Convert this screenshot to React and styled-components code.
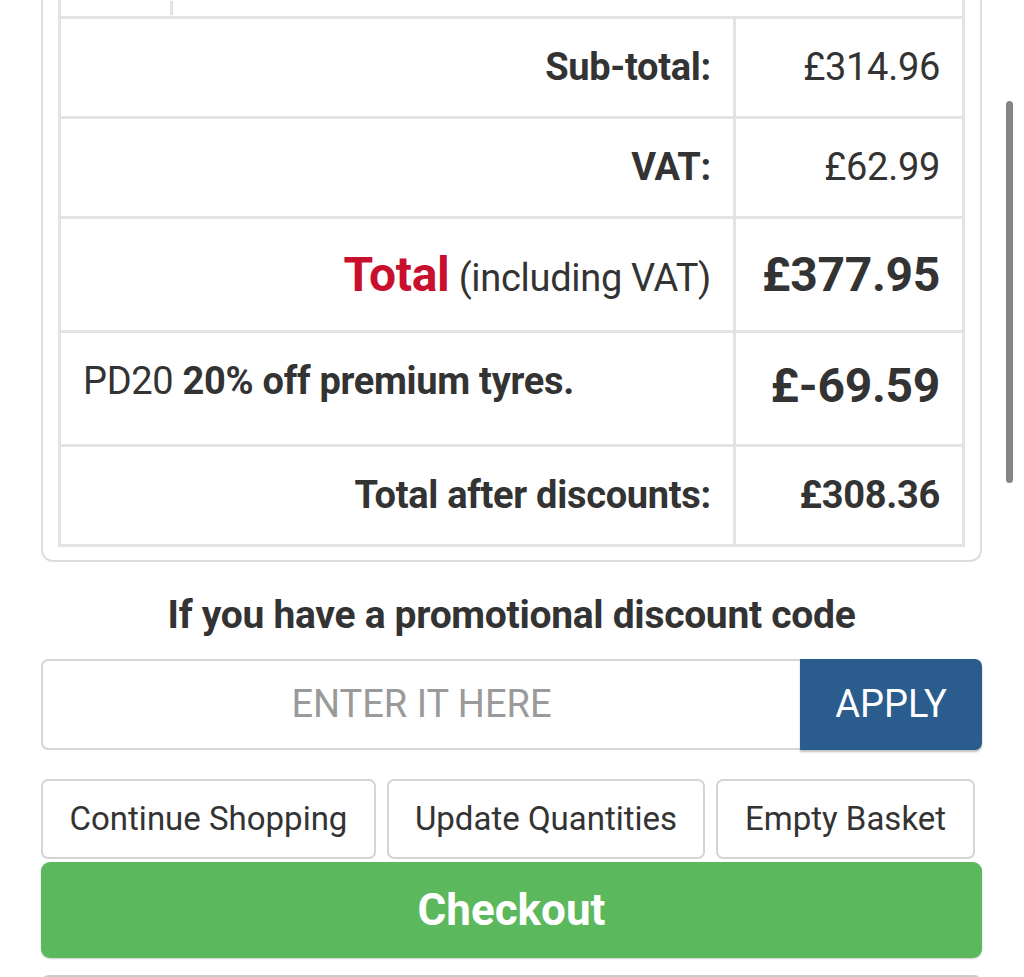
import React from "react";
import styled, { createGlobalStyle } from "styled-components";

const GlobalStyle = createGlobalStyle`
  html, body {
    margin: 0;
    padding: 0;
    background: #fff;
    overflow: hidden;
  }
  body {
    font-family: Roboto, "Liberation Sans", Arial, sans-serif;
    color: #333;
  }
`;

const Page = styled.div`
  padding: 0 42px 0 41px;
`;

const Panel = styled.div`
  border: 2px solid #ddd;
  border-top: none;
  border-radius: 0 0 12px 12px;
  padding: 0 15px 13px;
`;

const Table = styled.table`
  width: 100%;
  border-collapse: collapse;
  table-layout: fixed;
`;

const Cell = styled.td`
  border: 3px solid #e3e3e3;
  border-top: ${(p) => (p.$noTop ? "none" : "3px solid #e3e3e3")};
  height: ${(p) => p.$h || 94}px;
  padding: 0 22px 0 22px;
  text-align: ${(p) => p.$align || "right"};
  vertical-align: middle;
  font-size: ${(p) => p.$size || 38}px;
  font-weight: ${(p) => (p.$bold ? 700 : 400)};
  letter-spacing: -0.3px;
  color: #333;
  white-space: nowrap;
  box-sizing: border-box;
`;

const Red = styled.span`
  color: #c8102e;
  font-weight: 700;
  font-size: 48px;
`;

const Light = styled.span`
  font-weight: 400;
`;

const Heading = styled.h3`
  margin: 31px 0 22px;
  text-align: center;
  font-size: 39px;
  line-height: 44px;
  font-weight: 700;
  letter-spacing: -0.3px;
  color: #333;
`;

const PromoRow = styled.div`
  display: flex;
  height: 91px;
`;

const PromoInput = styled.input`
  flex: 1;
  min-width: 0;
  border: 2px solid #d6d6d6;
  border-right: none;
  border-radius: 7px 0 0 7px;
  font-family: Roboto, "Liberation Sans", Arial, sans-serif;
  font-size: 38px;
  text-align: center;
  color: #333;
  outline: none;
  padding: 0;
  &::placeholder {
    color: #9a9a9a;
  }
`;

const ApplyButton = styled.button`
  width: 182px;
  border: none;
  background: #2a5d8d;
  color: #fff;
  font-family: Roboto, "Liberation Sans", Arial, sans-serif;
  font-size: 38px;
  border-radius: 0 7px 7px 0;
  box-shadow: 0 2px 2px rgba(0, 0, 0, 0.25);
`;

const ButtonRow = styled.div`
  display: flex;
  gap: 11px;
  margin-top: 29px;
  padding-right: 7px;
`;

const PlainButton = styled.button`
  flex: ${(p) => p.$grow};
  height: 80px;
  background: #fff;
  border: 2px solid #d4d4d4;
  border-radius: 7px;
  font-family: Roboto, "Liberation Sans", Arial, sans-serif;
  font-size: 33px;
  color: #333;
  padding: 0;
  white-space: nowrap;
`;

const Checkout = styled.button`
  display: block;
  width: 100%;
  height: 96px;
  margin-top: 3px;
  border: none;
  border-radius: 9px;
  background: #5cb85c;
  color: #fff;
  font-family: Roboto, "Liberation Sans", Arial, sans-serif;
  font-size: 44px;
  font-weight: 700;
  box-shadow: 0 1px 2px rgba(0, 0, 0, 0.2);
`;

const NextEdge = styled.div`
  margin-top: 17px;
  height: 10px;
  border: 2px solid #ccc;
  border-bottom: none;
  border-radius: 8px 8px 0 0;
`;

const Scrollbar = styled.div`
  position: fixed;
  right: 11px;
  top: 101px;
  width: 7px;
  height: 382px;
  border-radius: 4px;
  background: #858585;
`;

const rows = [
  { label: "Sub-total:", value: "£314.96", h: 100 },
  { label: "VAT:", value: "£62.99", h: 100 },
];

const App = () => {
  return (
    <>
      <GlobalStyle />
      <Page>
        <Panel>
          <Table>
            <colgroup>
              <col />
              <col style={{ width: "229px" }} />
            </colgroup>
            <tbody>
              <tr>
                <Cell colSpan={2} $noTop $h={17} style={{ padding: 0 }}>
                  <Table>
                    <tbody>
                      <tr>
                        <Cell $noTop $h={14} style={{ width: "110px", borderLeft: "none", borderBottom: "none" }} />
                        <Cell $noTop $h={14} style={{ borderRight: "none", borderBottom: "none" }} />
                      </tr>
                    </tbody>
                  </Table>
                </Cell>
              </tr>
              {rows.map((r) => (
                <tr key={r.label}>
                  <Cell $bold $h={r.h}>{r.label}</Cell>
                  <Cell $h={r.h}>{r.value}</Cell>
                </tr>
              ))}
              <tr>
                <Cell $h={114}>
                  <Red>Total</Red> (including VAT)
                </Cell>
                <Cell $h={114} $bold $size={48}>£377.95</Cell>
              </tr>
              <tr>
                <Cell $h={114} $align="left" $bold style={{ paddingBottom: "14px" }}>
                  <Light>PD20</Light> 20% off premium tyres.
                </Cell>
                <Cell $h={114} $bold $size={48} style={{ paddingBottom: "6px" }}>£-69.59</Cell>
              </tr>
              <tr>
                <Cell $h={100} $bold>Total after discounts:</Cell>
                <Cell $h={100} $bold>£308.36</Cell>
              </tr>
            </tbody>
          </Table>
        </Panel>

        <Heading>If you have a promotional discount code</Heading>

        <PromoRow>
          <PromoInput placeholder="ENTER IT HERE" />
          <ApplyButton>APPLY</ApplyButton>
        </PromoRow>

        <ButtonRow>
          <PlainButton $grow={335}>Continue Shopping</PlainButton>
          <PlainButton $grow={318}>Update Quantities</PlainButton>
          <PlainButton $grow={258}>Empty Basket</PlainButton>
        </ButtonRow>

        <Checkout>Checkout</Checkout>
        <NextEdge />
      </Page>
      <Scrollbar />
    </>
  );
};

export default App;
